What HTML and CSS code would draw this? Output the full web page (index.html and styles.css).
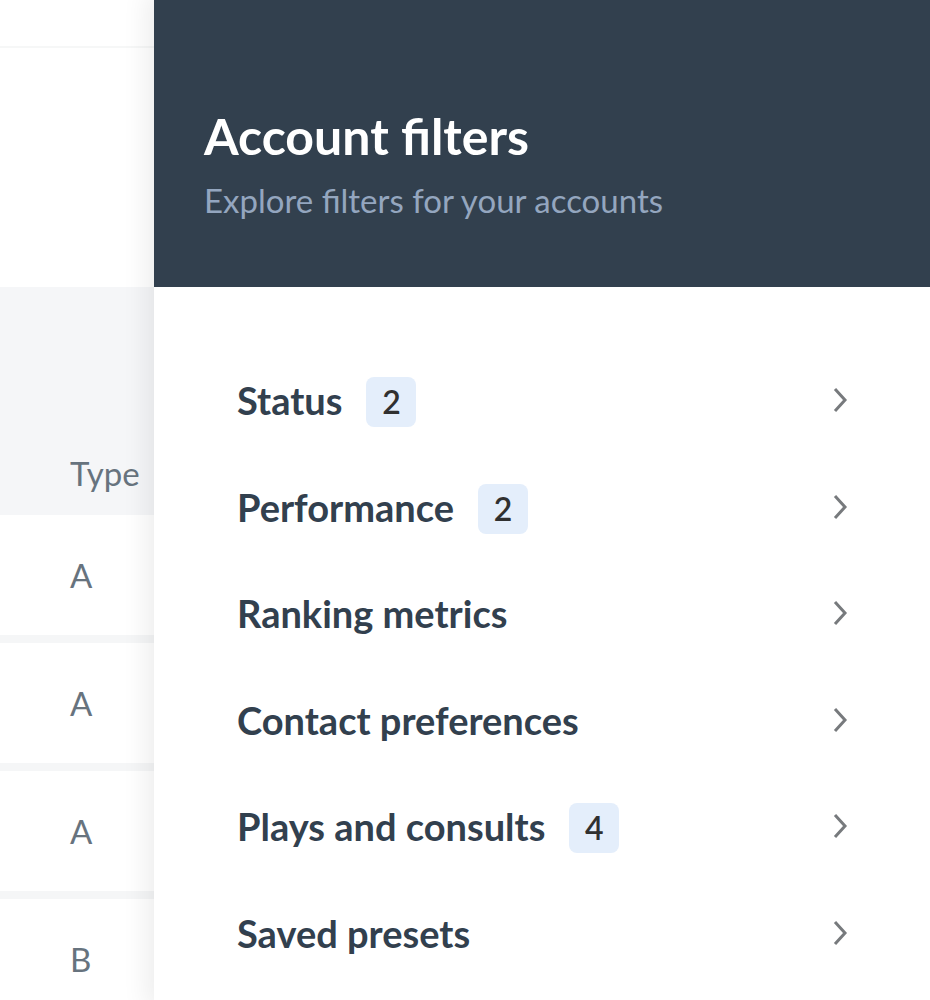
FILE: index.html
```html
<!DOCTYPE html>
<html lang="en">
<head>
<meta charset="utf-8">
<title>Account filters</title>
<link rel="stylesheet" href="styles.css">
</head>
<body>
<div class="app">
  <main class="page">
    <div class="topbar"></div>
    <div class="intro"></div>
    <table class="accounts">
      <thead><tr><th scope="col">Type</th></tr></thead>
      <tbody>
        <tr><td>A</td></tr>
        <tr><td>A</td></tr>
        <tr><td>A</td></tr>
        <tr><td>B</td></tr>
      </tbody>
    </table>
  </main>
  <aside class="drawer" aria-labelledby="drawer-title">
    <header class="drawer-header">
      <h1 id="drawer-title">Account filters</h1>
      <p>Explore filters for your accounts</p>
    </header>
    <div class="filters">
      <button class="filter" type="button"><span>Status</span><span class="badge">2</span><svg class="chevron" viewBox="0 0 16 28"><path d="M3 3l10 11L3 25"/></svg></button>
      <button class="filter" type="button"><span>Performance</span><span class="badge">2</span><svg class="chevron" viewBox="0 0 16 28"><path d="M3 3l10 11L3 25"/></svg></button>
      <button class="filter" type="button"><span>Ranking metrics</span><svg class="chevron" viewBox="0 0 16 28"><path d="M3 3l10 11L3 25"/></svg></button>
      <button class="filter" type="button"><span>Contact preferences</span><svg class="chevron" viewBox="0 0 16 28"><path d="M3 3l10 11L3 25"/></svg></button>
      <button class="filter" type="button"><span>Plays and consults</span><span class="badge">4</span><svg class="chevron" viewBox="0 0 16 28"><path d="M3 3l10 11L3 25"/></svg></button>
      <button class="filter" type="button"><span>Saved presets</span><svg class="chevron" viewBox="0 0 16 28"><path d="M3 3l10 11L3 25"/></svg></button>
    </div>
  </aside>
</div>
</body>
</html>
```
FILE: styles.css
```css
* { box-sizing: border-box; }
body {
  margin: 0;
  font-family: Lato, sans-serif;
  color: #32404e;
  background: #fff;
}
.app {
  display: flex;
  height: 100vh;
  overflow: hidden;
}
.page { flex: 0 0 154px; }
.topbar {
  height: 48px;
  border-bottom: 2px solid #f6f7f7;
}
.intro { height: 239px; }
.accounts {
  width: 100%;
  border-spacing: 0;
  font-size: 33px;
  line-height: 40px;
  color: #67737e;
}
.accounts th {
  height: 228px;
  padding: 0 0 22px 70px;
  font-weight: 400;
  text-align: left;
  vertical-align: bottom;
  background: #f5f6f8;
}
.accounts td {
  height: 128px;
  padding: 0 0 0 70px;
  border-bottom: 8px solid #f5f6f7;
}
.drawer {
  flex: 1;
  position: relative;
  background: #fff;
  box-shadow: 0 0 24px 8px rgba(0, 0, 0, 0.07);
}
.drawer-header {
  padding: 104px 50px 64px;
  background: #32404e;
}
.drawer-header h1 {
  margin: 0;
  font-size: 50px;
  line-height: 64px;
  font-weight: 700;
  color: #fff;
}
.drawer-header p {
  margin: 10px 0 0;
  font-size: 33px;
  line-height: 45px;
  color: #94a6bf;
}
.filters {
  display: grid;
  grid-auto-rows: 1fr;
  min-height: 701px;
  padding: 62px 82px 0 83px;
}
.filter {
  display: flex;
  align-items: center;
  gap: 24px;
  padding: 0;
  border: 0;
  background: none;
  font: 700 38px/50px Lato, sans-serif;
  color: #32404e;
}
.filter span:first-child { padding-bottom: 4px; }
.badge {
  width: 50px;
  border-radius: 8px;
  background: #e4eefb;
  font-size: 32px;
  font-weight: 600;
  color: #303030;
}
.chevron {
  width: 16px;
  height: 32px;
  padding-bottom: 4px;
  margin-left: auto;
  fill: none;
  stroke: #777a7d;
  stroke-width: 3;
}
```
